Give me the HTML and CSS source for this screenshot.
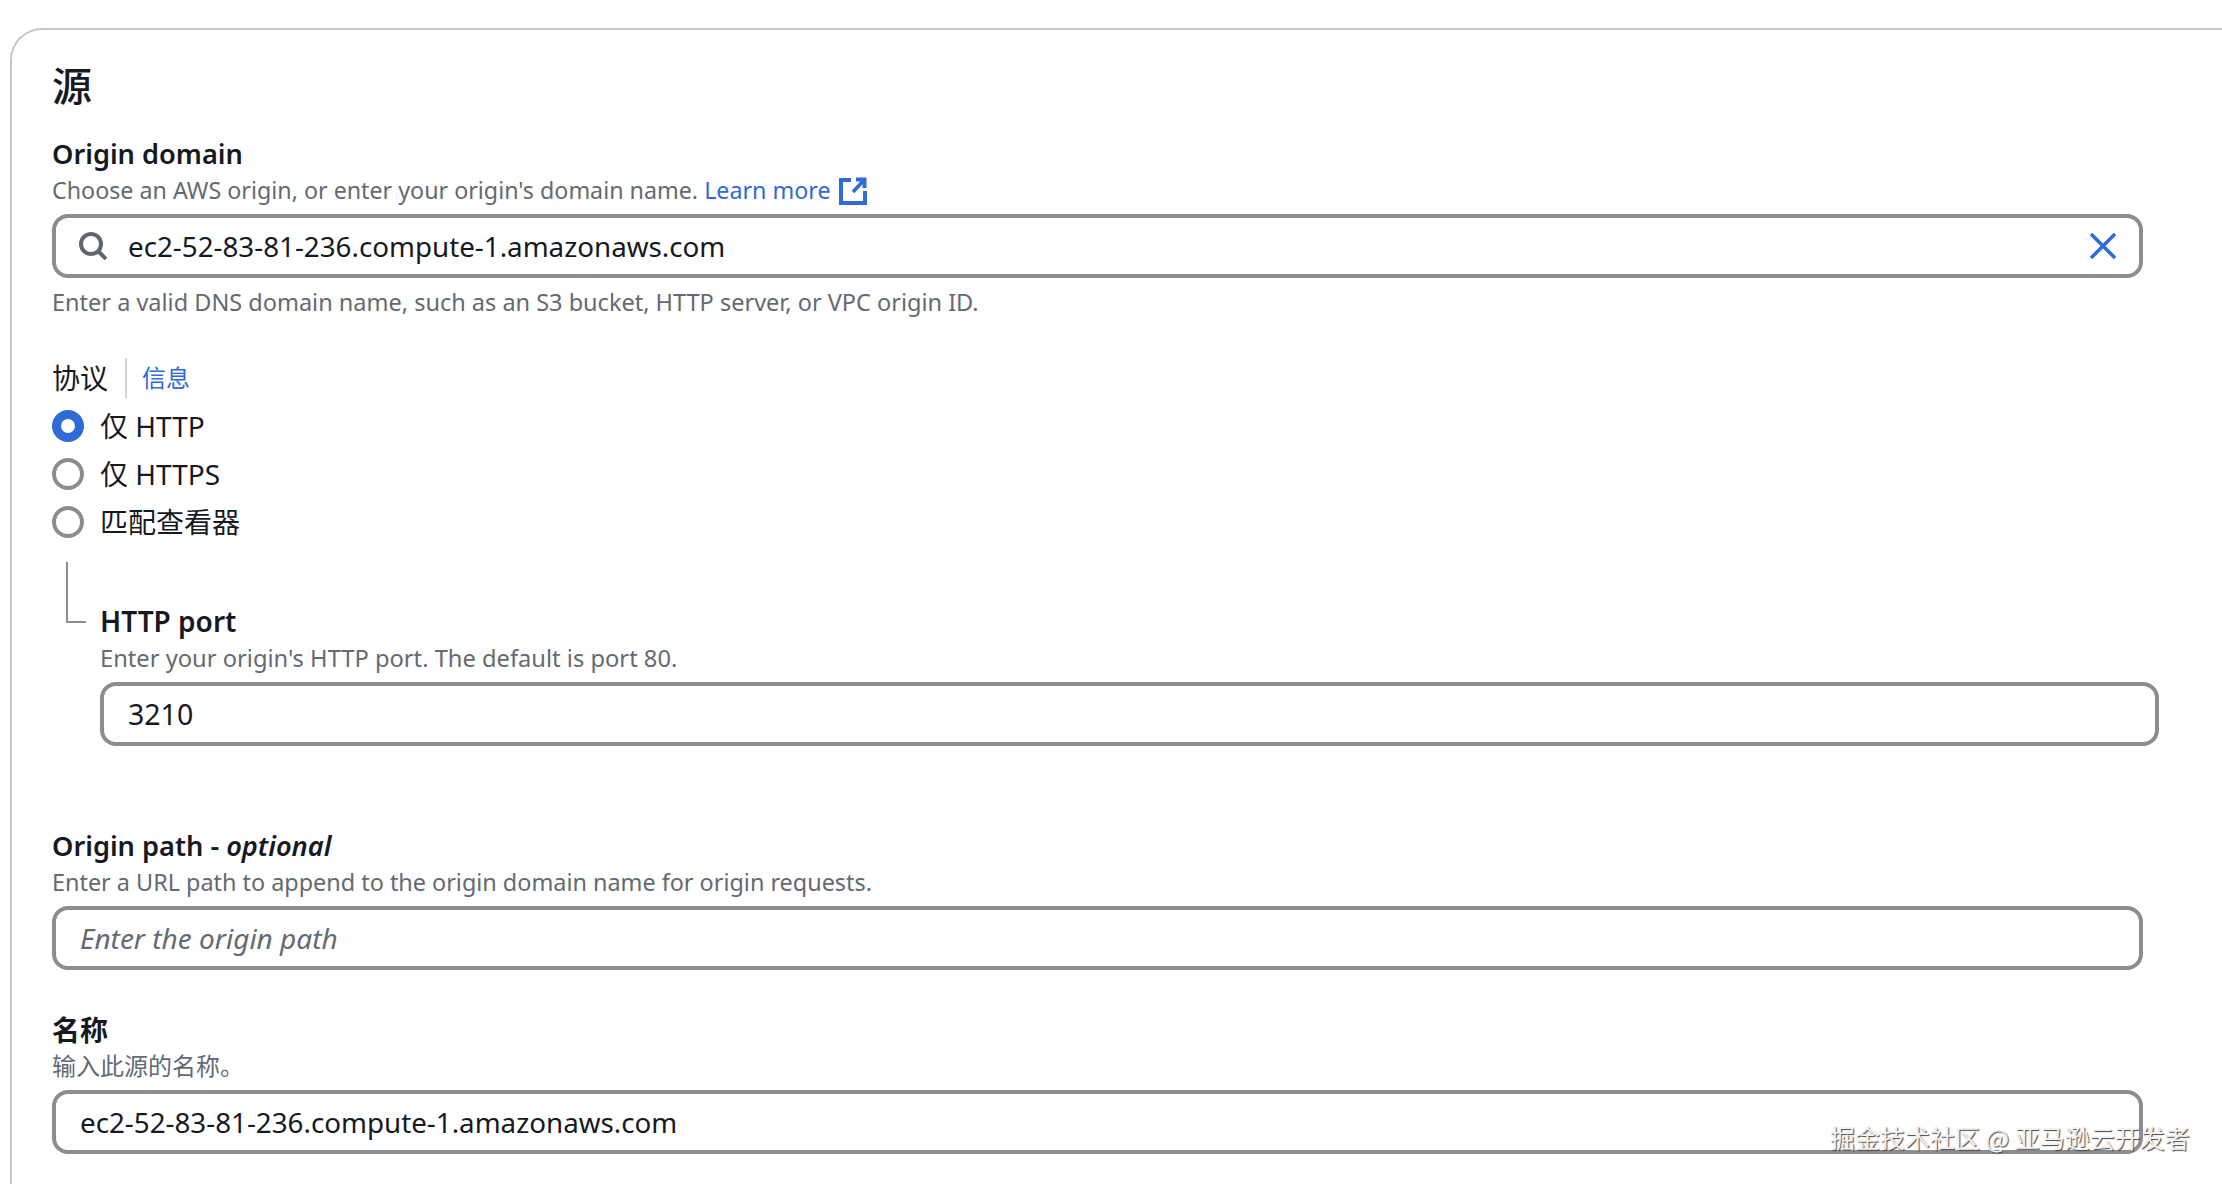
FILE: index.html
```html
<!DOCTYPE html>
<html lang="zh-CN">
<head>
<meta charset="utf-8">
<title>源</title>
<link rel="stylesheet" href="styles.css">
</head>
<body>
<main class="card">
  <h2 class="title">源</h2>
  <section class="field f-domain">
    <div class="label">Origin domain</div>
    <div class="desc choose">Choose an AWS origin, or enter your origin's domain name. <a class="link">Learn more</a>
      <svg class="ext" viewBox="0 0 28 28" width="28" height="28" fill="none" stroke="currentColor" stroke-width="4"><path d="M12 3H2v23h24V14"/><path d="M17 2.500h8.500V11"/><path d="M25 3L14 15" stroke-width="3.500"/></svg>
    </div>
    <div class="input search">
      <svg class="mag" viewBox="0 0 28 28" width="28" height="28" fill="none" stroke="currentColor" stroke-width="4"><circle cx="12" cy="12" r="10"/><path d="M19 19l8 8"/></svg>
      <span class="val">ec2-52-83-81-236.compute-1.amazonaws.com</span>
      <svg class="clear" viewBox="0 0 26 26" width="26" height="26" fill="none" stroke="currentColor" stroke-width="3.500"><path d="M1 1l24 24M25 1L1 25"/></svg>
    </div>
    <div class="desc help">Enter a valid DNS domain name, such as an S3 bucket, HTTP server, or VPC origin ID.</div>
  </section>

  <section class="protocol">
    <div class="proto-head"><span class="proto-label">协议</span><a class="link info">信息</a></div>
    <div class="radio"><span class="dot on"></span><span>仅 HTTP</span></div>
    <div class="radio"><span class="dot"></span><span>仅 HTTPS</span></div>
    <div class="radio"><span class="dot"></span><span>匹配查看器</span></div>
    <div class="sub">
      <span class="elbow"></span>
      <div class="label">HTTP port</div>
      <div class="desc">Enter your origin's HTTP port. The default is port 80.</div>
      <div class="input port"><span class="val">3210</span></div>
    </div>
  </section>

  <section class="field f-path">
    <div class="label">Origin path - <em>optional</em></div>
    <div class="desc">Enter a URL path to append to the origin domain name for origin requests.</div>
    <div class="input"><span class="ph">Enter the origin path</span></div>
  </section>

  <section class="field f-name">
    <div class="label">名称</div>
    <div class="desc">输入此源的名称。</div>
    <div class="input"><span class="val">ec2-52-83-81-236.compute-1.amazonaws.com</span></div>
  </section>
</main>
<div class="watermark">掘金技术社区 @ 亚马逊云开发者</div>
</body>
</html>
```
FILE: styles.css
```css
* { box-sizing: border-box; }
html, body { margin: 0; height: 100%; }
body {
  position: relative;
  height: 1184px;
  overflow: hidden;
  background: #fff;
  color: #16191f;
  font-family: "Noto Sans", "Noto Sans CJK SC", sans-serif;
  font-size: 28px;
  line-height: 36px;
}
.card {
  margin: 28px 0 0 10px;
  height: 1156px;
  padding: 31px 0 0 40px;
  border-top: 2px solid #c6c6cd;
  border-left: 2px solid #c6c6cd;
  border-top-left-radius: 32px;
}
.title {
  margin: 0;
  font-size: 40px;
  line-height: 50px;
  font-weight: 500;
}
.field, .protocol { width: 2091px; }
.f-domain { margin-top: 25px; }
.label { font-weight: 600; font-size: 27.2px; }
.label em { font-style: italic; font-weight: 600; }
.sub .label, .f-name .label { font-size: 28px; }
.desc { color: #646a72; font-size: 23.4px; height: 36px; line-height: 36px; }
.desc.choose { font-size: 23.25px; }
.desc.help { font-size: 23.5px; }
.sub .desc { font-size: 23.7px; margin-top: 1px; }
.f-name .desc { font-size: 24px; }
.link { color: #2e6bd6; }
.ext { color: #2e6bd6; vertical-align: -6px; margin-left: 2px; }
.input {
  display: flex;
  align-items: center;
  height: 64px;
  margin-top: 6px;
  padding: 0 24px;
  border: 4px solid #8d8d8f;
  border-radius: 16px;
  background: #fff;
}
.search { padding-left: 23px; }
.mag { color: #5f6670; flex: none; margin-right: 21px; }
.val { flex: 1; font-size: 27.75px; }
.port .val { font-size: 28.5px; }
.clear { color: #2e6bd6; flex: none; margin-right: -1px; }
.ph { color: #646a72; font-style: italic; }
.help { margin-top: 6px; }
.protocol { margin-top: 38px; }
.proto-head { display: flex; align-items: center; height: 40px; margin-bottom: 4px; }
.proto-label { padding-right: 17px; border-right: 2px solid #d1d5db; height: 40px; line-height: 40px; }
.info { font-size: 24px; margin-left: 15px; line-height: 40px; }
.radio { display: flex; align-items: center; height: 48px; gap: 16px; }
.dot { width: 32px; height: 32px; flex: none; border-radius: 50%; border: 4px solid #8d8d8f; background: #fff; }
.dot.on { border: 9px solid #2e6bd6; }
.sub { position: relative; margin-top: 16px; padding: 41px 0 0 48px; width: 2107px; }
.elbow { position: absolute; left: 14px; top: 0; width: 20px; height: 61px; border-left: 2px solid #8d8d8f; border-bottom: 2px solid #8d8d8f; }
.input.port { margin-top: 6px; }
.f-path { margin-top: 82px; }
.f-name { margin-top: 42px; }
.watermark {
  position: absolute;
  left: 1830px;
  top: 1120px;
  font-family: "Noto Sans CJK SC", sans-serif;
  font-size: 25px;
  line-height: 34px;
  color: #f2f2f2;
  text-shadow: 1px 1px 1px #444;
  white-space: nowrap;
}
```
